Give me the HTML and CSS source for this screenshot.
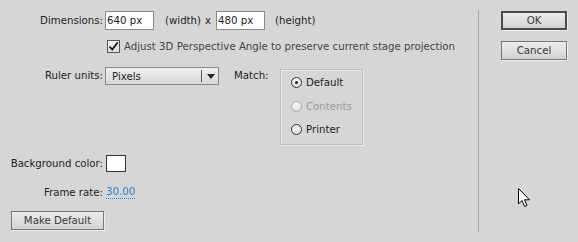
FILE: index.html
```html
<!DOCTYPE html>
<html lang="en">
<head>
  <meta charset="UTF-8">
  <title>Document Settings</title>
  <link rel="stylesheet" href="styles.css">
</head>
<body>
  <div class="dialog">
    <div class="main">
      <!-- Dimensões -->
      <div class="row row-dims">
        <span class="label">Dimensions:</span>
        <span class="field">640 px</span>
        <span class="unit">(width)</span>
        <span class="times">x</span>
        <span class="field">480 px</span>
        <span class="unit unit-h">(height)</span>
      </div>

      <div class="row row-check">
        <span class="check">
          <svg width="11" height="11" viewBox="0 0 11 11"><path d="M1.5 5.5 L4.2 8.5 L9.8 1.2" fill="none" stroke="#1a1a1a" stroke-width="1.8"/></svg>
        </span>
        <span class="check-text">Adjust 3D Perspective Angle to preserve current stage projection</span>
      </div>

      <div class="row row-ruler">
        <span class="label">Ruler units:</span>
        <span class="select">
          <span class="select-value">Pixels</span>
          <span class="select-arrow"></span>
        </span>
        <span class="match">Match:</span>
        <div class="group">
          <div class="radio-item"><span class="radio on"></span>Default</div>
          <div class="radio-item disabled"><span class="radio"></span>Contents</div>
          <div class="radio-item"><span class="radio"></span>Printer</div>
        </div>
      </div>

      <div class="row row-bg">
        <span class="label">Background color:</span>
        <span class="swatch"></span>
      </div>

      <div class="row row-rate">
        <span class="label">Frame rate:</span>
        <span class="rate">30.00</span>
      </div>

      <div class="row row-default">
        <button class="btn btn-default">Make Default</button>
      </div>
    </div>

    <div class="divider"></div>

    <div class="side">
      <button class="btn btn-ok">OK</button>
      <button class="btn btn-cancel">Cancel</button>
    </div>
  </div>

  <svg class="cursor" width="14" height="21" viewBox="0 0 14 21">
    <path d="M0.5 0.5 L0.5 16 L4 12.5 L6.5 18.5 L9 17.5 L6.5 11.8 L11.5 11.8 Z" fill="#fff" stroke="#000" stroke-width="1"/>
  </svg>
</body>
</html>
```

FILE: styles.css
```css
body {
  margin: 0;
  background: #d6d6d6;
  font-family: "DejaVu Sans", Verdana, sans-serif;
  font-size: 10.2px;
  color: #222;
  width: 578px;
  height: 242px;
  overflow: hidden;
  position: relative;
}
.dialog {
  display: flex;
  height: 242px;
}
.main {
  width: 478px;
  padding-top: 11px;
}
.row {
  display: flex;
  align-items: center;
}
.label {
  width: 103px;
  text-align: right;
  padding-right: 2px;
  flex-shrink: 0;
}
.field {
  box-sizing: border-box;
  width: 49px;
  height: 19px;
  background: #fff;
  border: 1px solid #8a8a8a;
  padding: 2px 2px 0 1px;
  line-height: 14px;
}
.unit {
  margin-left: 11px;
}
.times {
  margin-left: 4px;
  margin-right: 5px;
}
.unit-h {
  margin-left: 10px;
}
.row-check {
  margin-top: 10px;
  padding-left: 107px;
}
.check {
  box-sizing: border-box;
  width: 13px;
  height: 13px;
  border: 1px solid #555;
  background: linear-gradient(#f4f4f4, #dcdcdc);
  display: flex;
  align-items: center;
  justify-content: center;
}
.check-text {
  margin-left: 4px;
  color: #444;
}
.row-ruler {
  margin-top: 14px;
  align-items: flex-start;
}
.row-ruler .label {
  margin-top: 3px;
}
.select {
  box-sizing: border-box;
  width: 114px;
  height: 18px;
  border: 1px solid #8a8a8a;
  background: linear-gradient(#efefef, #d9d9d9);
  display: flex;
  align-items: center;
  position: relative;
}
.select-value {
  padding-left: 6px;
  flex: 1;
}
.select-arrow {
  width: 16px;
  height: 12px;
  border-left: 1px solid #555;
  position: relative;
}
.select-arrow::after {
  content: "";
  position: absolute;
  left: 5px;
  top: 4px;
  border-left: 4px solid transparent;
  border-right: 4px solid transparent;
  border-top: 5px solid #222;
}
.match {
  width: 46px;
  margin-left: 15px;
  margin-top: 3px;
}
.group {
  box-sizing: border-box;
  margin-top: 2px;
  width: 83px;
  height: 76px;
  border: 1px solid #bdbdbd;
  box-shadow: 1px 1px 0 #ececec, inset 1px 1px 0 #ececec;
  padding: 1px 0 0 10px;
}
.radio-item {
  display: flex;
  align-items: center;
  height: 23.5px;
}
.radio {
  box-sizing: border-box;
  width: 11px;
  height: 11px;
  border: 1px solid #333;
  border-radius: 50%;
  background: linear-gradient(#fafafa, #dedede);
  margin-right: 4px;
  position: relative;
}
.radio.on::after {
  content: "";
  position: absolute;
  left: 3px;
  top: 3px;
  width: 3px;
  height: 3px;
  border-radius: 50%;
  background: #222;
}
.disabled {
  color: #9a9a9a;
}
.disabled .radio {
  border-color: #a8a8a8;
}
.row-bg {
  margin-top: 10px;
}
.swatch {
  box-sizing: border-box;
  width: 20px;
  height: 17px;
  background: #fff;
  border: 1px solid #333;
  margin-left: 1px;
}
.row-rate {
  margin-top: 14px;
}
.rate {
  color: #2f7fd0;
  border-bottom: 1px dotted #2f7fd0;
  line-height: 12px;
  margin-left: 1px;
}
.row-default {
  margin-top: 12px;
  padding-left: 11px;
}
.btn {
  box-sizing: border-box;
  font-family: inherit;
  font-size: 10.2px;
  color: #3a3a3a;
  border: 1px solid #777;
  background: linear-gradient(#ececec, #d2d2d2);
  padding: 0;
  height: 19px;
  box-shadow: 1px 1px 0 #eee;
}
.btn-default {
  width: 93px;
}
.divider {
  width: 1px;
  background: #a8a8a8;
  margin-top: 10px;
  height: 222px;
}
.side {
  display: flex;
  flex-direction: column;
  padding-left: 22px;
  padding-top: 11px;
  gap: 11px;
}
.btn-ok,
.btn-cancel {
  width: 66px;
}
.btn-ok {
  border: 2px solid #4a4a4a;
}
.cursor {
  position: absolute;
  left: 518px;
  top: 188px;
}
```
